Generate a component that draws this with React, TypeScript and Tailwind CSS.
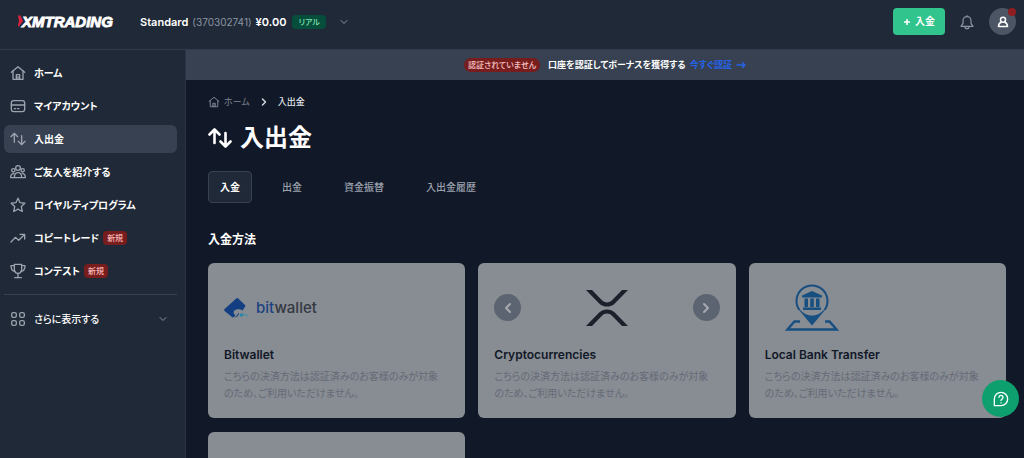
import type { ReactNode } from 'react';
import { ChevronDown, ChevronLeft, ChevronRight } from 'lucide-react';

type IconName = 'home' | 'account' | 'transfer' | 'friends' | 'star' | 'trend' | 'trophy' | 'grid';

const NAV_ITEMS: { label: string; icon: IconName; isNew?: boolean; active?: boolean }[] = [
  { label: 'ホーム', icon: 'home' },
  { label: 'マイアカウント', icon: 'account' },
  { label: '入出金', icon: 'transfer', active: true },
  { label: 'ご友人を紹介する', icon: 'friends' },
  { label: 'ロイヤルティプログラム', icon: 'star' },
  { label: 'コピートレード', icon: 'trend', isNew: true },
  { label: 'コンテスト', icon: 'trophy', isNew: true },
];

const TABS = ['入金', '出金', '資金振替', '入出金履歴'];

const UNVERIFIED_NOTE = 'こちらの決済方法は認証済みのお客様のみが対象のため、ご利用いただけません。';

const ICON_PATHS: Record<IconName, ReactNode> = {
  home: (
    <>
      <path d="M2 11 12 2.5 22 11" />
      <path d="M4.5 9v12.5h15V9" />
      <path d="M9.5 21v-6.5h5V21M12 17.500v3.500" />
    </>
  ),
  account: (
    <>
      <rect x="2" y="4" width="20" height="16.500" rx="3.500" />
      <path d="M2 10.500h20M6.500 16h2M11.500 16h2" />
    </>
  ),
  transfer: (
    <>
      <path d="M6.500 17V4M1.500 8.500l5-5 5 5" />
      <path d="M17.500 7v13M12.500 15.500l5 5 5-5" />
    </>
  ),
  friends: (
    <>
      <circle cx="12" cy="6" r="3.500" />
      <circle cx="5" cy="9.500" r="2.500" />
      <circle cx="19" cy="9.500" r="2.500" />
      <path d="M6.500 20.500c0-5 2-7.500 5.500-7.500s5.500 2.500 5.500 7.500zM6.500 20.500H1c0-4 1.500-6 4.500-6M17.500 20.500H23c0-4-1.500-6-4.500-6" />
    </>
  ),
  star: <path d="m12 1.800 3.100 6.700 7.200.9-5.300 5 1.400 7.300-6.400-3.600-6.400 3.600L7 14.400l-5.300-5 7.200-.9z" />,
  trend: (
    <>
      <path d="m1.500 18 6.500-7 5 4.500 8.500-8.500" />
      <path d="M15 6.500h7v7" />
    </>
  ),
  trophy: (
    <>
      <path d="M6.500 2h11v7c0 4-2 6.500-5.500 6.500S6.500 13 6.500 9z" />
      <path d="M6.500 4H1.500c0 5 2 8 6 8.500M17.500 4h5c0 5-2 8-6 8.500M12 15.500V21M7 22h10" />
    </>
  ),
  grid: (
    <>
      <rect x="2.500" y="2.500" width="7" height="7" rx="2.500" />
      <rect x="14.500" y="2.500" width="7" height="7" rx="2.500" />
      <rect x="2.500" y="14.500" width="7" height="7" rx="2.500" />
      <rect x="14.500" y="14.500" width="7" height="7" rx="2.500" />
    </>
  ),
};

function Icon({ name, className, strokeWidth = 2 }: { name: IconName; className: string; strokeWidth?: number }) {
  return (
    <svg
      viewBox="0 0 24 24"
      className={className}
      fill="none"
      stroke="currentColor"
      strokeWidth={strokeWidth}
      strokeLinecap="round"
      strokeLinejoin="round"
      aria-hidden="true"
    >
      {ICON_PATHS[name]}
    </svg>
  );
}

function Logo() {
  return (
    <a href="#home" aria-label="XMTRADING" className="shrink-0">
      <svg viewBox="0 0 98 16" className="h-4 w-[98px]">
        <path d="M0 1.500h2.500l2.500 5.500-4 5.500H-.5l1.500-5.500z" fill="#d8233c" />
        <text
          x="4"
          y="12.500"
          fill="#fff"
          stroke="#fff"
          strokeWidth="0.900"
          fontFamily="Liberation Sans, sans-serif"
          fontSize="15"
          fontWeight="700"
          fontStyle="italic"
        >
          XMTRADING
        </text>
      </svg>
    </a>
  );
}

function Header() {
  return (
    <header className="flex h-[50px] shrink-0 items-center border-b border-[#323d4c] bg-[#1f2937] pb-1.5 pr-2 pl-[18px]">
      <Logo />
      <button type="button" className="ml-6 flex items-center text-[11px] leading-4">
        <span className="font-semibold text-white">Standard</span>
        <span className="ml-1 text-[10px] text-[#8d95a2]">(370302741)</span>
        <span className="ml-1 font-semibold text-white">¥0.00</span>
        <span className="ml-1.5 rounded bg-[#064e3b] px-1.5 text-[8px] leading-[14px] font-medium text-[#7fe0b0]">
          リアル
        </span>
        <ChevronDown className="ml-3 h-3 w-3 text-[#8d95a2]" />
      </button>

      <div className="ml-auto flex items-center">
        <button
          type="button"
          className="flex h-[27px] items-center gap-1 rounded bg-[#31c48d] px-2.5 text-[10px] font-bold text-white"
        >
          <svg viewBox="0 0 8 8" className="h-2 w-2" stroke="currentColor" strokeWidth="1.500" aria-hidden="true">
            <path d="M4 1v6M1 4h6" />
          </svg>
          入金
        </button>
        <button type="button" aria-label="通知" className="ml-3.5">
          <svg
            viewBox="0 0 24 24"
            className="h-4 w-4 text-[#8d95a2]"
            fill="none"
            stroke="currentColor"
            strokeWidth={1.800}
            strokeLinejoin="round"
            aria-hidden="true"
          >
            <path d="M12 2v2M12 4c-4 0-6 3-6 6v4l-3 4.500h18L18 14v-4c0-3-2-6-6-6zM9 19c0 2 1 3 3 3s3-1 3-3" />
          </svg>
        </button>
        <button
          type="button"
          aria-label="プロフィール"
          className="relative ml-3.5 flex h-[27px] w-[27px] items-center justify-center rounded-full bg-[#4b5563] text-white"
        >
          <svg viewBox="0 0 24 24" className="h-3 w-3" fill="none" stroke="currentColor" strokeWidth={3} strokeLinejoin="round" aria-hidden="true">
            <circle cx="12" cy="7.500" r="5" />
            <path d="M9 12c-4 1.500-6 4.500-6 9h18c0-4.500-2-7.500-6-9" />
          </svg>
          <span className="absolute top-0 right-0 h-2 w-2 rounded-full bg-[#8f1d20]" />
        </button>
      </div>
    </header>
  );
}

function Sidebar() {
  return (
    <aside className="w-[186px] shrink-0 border-r border-[#2a3444] bg-[#1f2937] pt-[9px] pr-2 pl-1 text-[10px] text-white">
      <nav className="flex flex-col gap-[5px]">
        {NAV_ITEMS.map((item) => (
          <a
            key={item.label}
            href={`#${item.icon}`}
            className={`flex h-7 items-center rounded-md pl-1.5 font-semibold ${item.active ? 'bg-[#374151]' : ''}`}
          >
            <Icon name={item.icon} className="h-4 w-4 text-[#9ca3af]" />
            <span className="ml-2">{item.label}</span>
            {item.isNew && (
              <span className="ml-1 rounded bg-[#771d1d] px-1 text-[8px] leading-[14px] font-medium text-[#f8b4b4]">
                新規
              </span>
            )}
          </a>
        ))}
      </nav>
      <button
        type="button"
        className="mt-[9px] flex w-full items-center border-t border-[#374151] pt-4 pr-2 pl-1.5"
      >
        <Icon name="grid" className="h-4 w-4 text-[#9ca3af]" />
        <span className="ml-2 font-medium">さらに表示する</span>
        <ChevronDown className="ml-auto h-3 w-3 text-[#8d95a2]" />
      </button>
    </aside>
  );
}

function VerifyBanner() {
  return (
    <div className="flex h-[30px] shrink-0 items-center justify-center bg-[#374151] text-[9px] font-semibold text-white">
      <span className="rounded-full bg-[#771d1d] px-1 text-[8px] leading-[14px] font-medium text-[#f8c4c4]">
        認証されていません
      </span>
      <span className="ml-2">口座を認証してボーナスを獲得する</span>
      <a href="#verify" className="ml-1 flex items-center gap-1 text-[#2563eb]">
        今すぐ認証
        <svg viewBox="0 0 10 8" className="h-2 w-2.5" fill="none" stroke="currentColor" strokeWidth="1.300" aria-hidden="true">
          <path d="M.5 4h8.500M6 1l3 3-3 3" />
        </svg>
      </a>
    </div>
  );
}

function BitwalletLogo() {
  return (
    <div className="flex items-center gap-2">
      <svg viewBox="0 0 24 20" className="h-5 w-6" aria-hidden="true">
        <path
          d="M12.500.300a1.500 1.500 0 0 1 1.500 0l7 6.700a1.500 1.500 0 0 1 0 1.800L18.500 12.500c-2-1.500-6.500-1.800-8.500.5-1 2 0 3.500 1.500 4l-1.500 2a1.500 1.500 0 0 1-2 0L.6 13a1.500 1.500 0 0 1 0-2z"
          fill="#133f82"
        />
        <path d="M14 14.500c0 2-1 3.500-3.500 4.700 2 .3 3.500-1.200 4.500-3z" fill="#133f82" />
        <circle cx="17.500" cy="17" r="1.700" fill="#2586a8" />
        <circle cx="20.300" cy="16.500" r="1" fill="#3f93ab" />
        <circle cx="22.800" cy="17.500" r="1" fill="#3f93ab" />
      </svg>
      <span className="text-[15px] leading-5 font-medium text-[#333842]">
        <span className="text-[#1b4482]">bit</span>wallet
      </span>
    </div>
  );
}

function CryptoCarousel() {
  const arrowClass = 'flex h-[27px] w-[27px] items-center justify-center rounded-full bg-[#5d6471] text-[#a6a9af]';
  return (
    <div className="flex w-full items-center justify-between">
      <button type="button" aria-label="前へ" className={arrowClass}>
        <ChevronLeft className="h-4 w-4" strokeWidth={3} />
      </button>
      <svg viewBox="0 0 42 36" className="h-9 w-[42px]" fill="#1c202b" aria-hidden="true">
        <path d="M0 0h6l10 10.300c2.800 2.800 7.200 2.800 10 0L36 0h6L28.800 13.400c-4.300 4.200-11.300 4.200-15.600 0z" />
        <path d="M0 36h6l10-10.300c2.800-2.800 7.200-2.800 10 0L36 36h6L28.800 22.600c-4.300-4.200-11.300-4.200-15.600 0z" />
      </svg>
      <button type="button" aria-label="次へ" className={arrowClass}>
        <ChevronRight className="h-4 w-4" strokeWidth={3} />
      </button>
    </div>
  );
}

function BankLogo() {
  return (
    <svg viewBox="0 0 54 47" className="ml-5 h-[47px] w-[54px]" aria-hidden="true">
      <g fill="none" stroke="#164f80" strokeWidth="2">
        <path d="M14 25.500a15.500 15.500 0 1 1 26 0" />
        <path d="M15 37.500H9.500L2.500 45.500h49L44.500 37.500H40" strokeWidth="2.400" />
      </g>
      <path d="M12.700 24.500 27 41.500l14.300-17-1.200-.5C34 34 20 34 13.900 24z" fill="#164f80" />
      <path d="M27 7 17 11.500V13.500h20v-2zM19.500 14.500h3.500v8.500h-3.500zM25.300 14.500h3.500v8.500h-3.500zM31 14.500h3.500v8.500H31zM18 23.500h18v2.500H18z" fill="#164f80" />
    </svg>
  );
}

function MethodCard({ title, children }: { title: string; children: ReactNode }) {
  return (
    <article className="h-[155px] rounded-md bg-[#888c93] px-4">
      <div className="flex h-[83px] items-center pt-1.5">{children}</div>
      <h3 className="text-[12px] leading-[18px] font-semibold text-[#111827]">{title}</h3>
      <p className="mt-1 pr-2 text-[10px] leading-[17px] text-[#656a76]">{UNVERIFIED_NOTE}</p>
    </article>
  );
}

export default function App() {
  return (
    <div
      lang="ja"
      className="flex h-screen flex-col overflow-hidden bg-[#111827] font-[Inter,'Noto_Sans_CJK_JP',sans-serif] [font-feature-settings:'palt']"
    >
      <Header />
      <div className="flex min-h-0 flex-1">
        <Sidebar />
        <div className="flex min-w-0 flex-1 flex-col">
          <VerifyBanner />
          <main className="min-h-0 flex-1 overflow-y-auto pt-3.5 pr-[18px] pl-[22px] text-white [scrollbar-width:none]">
            <nav aria-label="パンくず" className="flex h-4 items-center text-[9px]">
              <a href="#home" className="flex items-center gap-1 text-[#7d8592]">
                <Icon name="home" className="h-3 w-3" />
                ホーム
              </a>
              <ChevronRight className="mx-2 h-3 w-3 text-[#d1d5db]" strokeWidth={3} />
              <span className="font-medium text-[#e5e7eb]">入出金</span>
            </nav>

            <h1 className="mt-3 flex h-8 items-center gap-2 text-[24px] leading-8 font-bold">
              <Icon name="transfer" className="h-6 w-6" strokeWidth={2.600} />
              入出金
            </h1>

            <div role="tablist" className="mt-[17px] flex h-8 gap-[18px] text-[10px] font-medium">
              {TABS.map((tab, index) => (
                <button
                  key={tab}
                  type="button"
                  role="tab"
                  aria-selected={index === 0}
                  className={`rounded border px-[11px] ${
                    index === 0
                      ? 'border-[#374151] bg-[#1f2937] font-bold text-white'
                      : 'border-transparent text-[#9ca3af]'
                  }`}
                >
                  {tab}
                </button>
              ))}
            </div>

            <h2 className="mt-7 text-[12px] leading-[18px] font-bold">入金方法</h2>

            <div className="mt-3.5 grid grid-cols-3 gap-x-[13px] gap-y-3.5">
              <MethodCard title="Bitwallet">
                <BitwalletLogo />
              </MethodCard>
              <MethodCard title="Cryptocurrencies">
                <CryptoCarousel />
              </MethodCard>
              <MethodCard title="Local Bank Transfer">
                <BankLogo />
              </MethodCard>
              <div className="h-[155px] rounded-md bg-[#888c93]" />
            </div>
          </main>
        </div>
      </div>

      <button
        type="button"
        aria-label="ヘルプ"
        className="fixed right-[5px] bottom-[41px] flex h-[37px] w-[37px] items-center justify-center rounded-full bg-[#0e9f6e] text-white"
      >
        <svg
          viewBox="0 0 24 24"
          className="h-4 w-4"
          fill="none"
          stroke="currentColor"
          strokeWidth={2}
          strokeLinecap="round"
          strokeLinejoin="round"
          aria-hidden="true"
        >
          <path d="M2 22V12A10 10 0 1 1 12 22z" />
          <path d="M9 9.500a3 3 0 1 1 4.500 2.600c-1 .6-1.500 1-1.500 2M12 17.500v.1" />
        </svg>
      </button>
    </div>
  );
}
